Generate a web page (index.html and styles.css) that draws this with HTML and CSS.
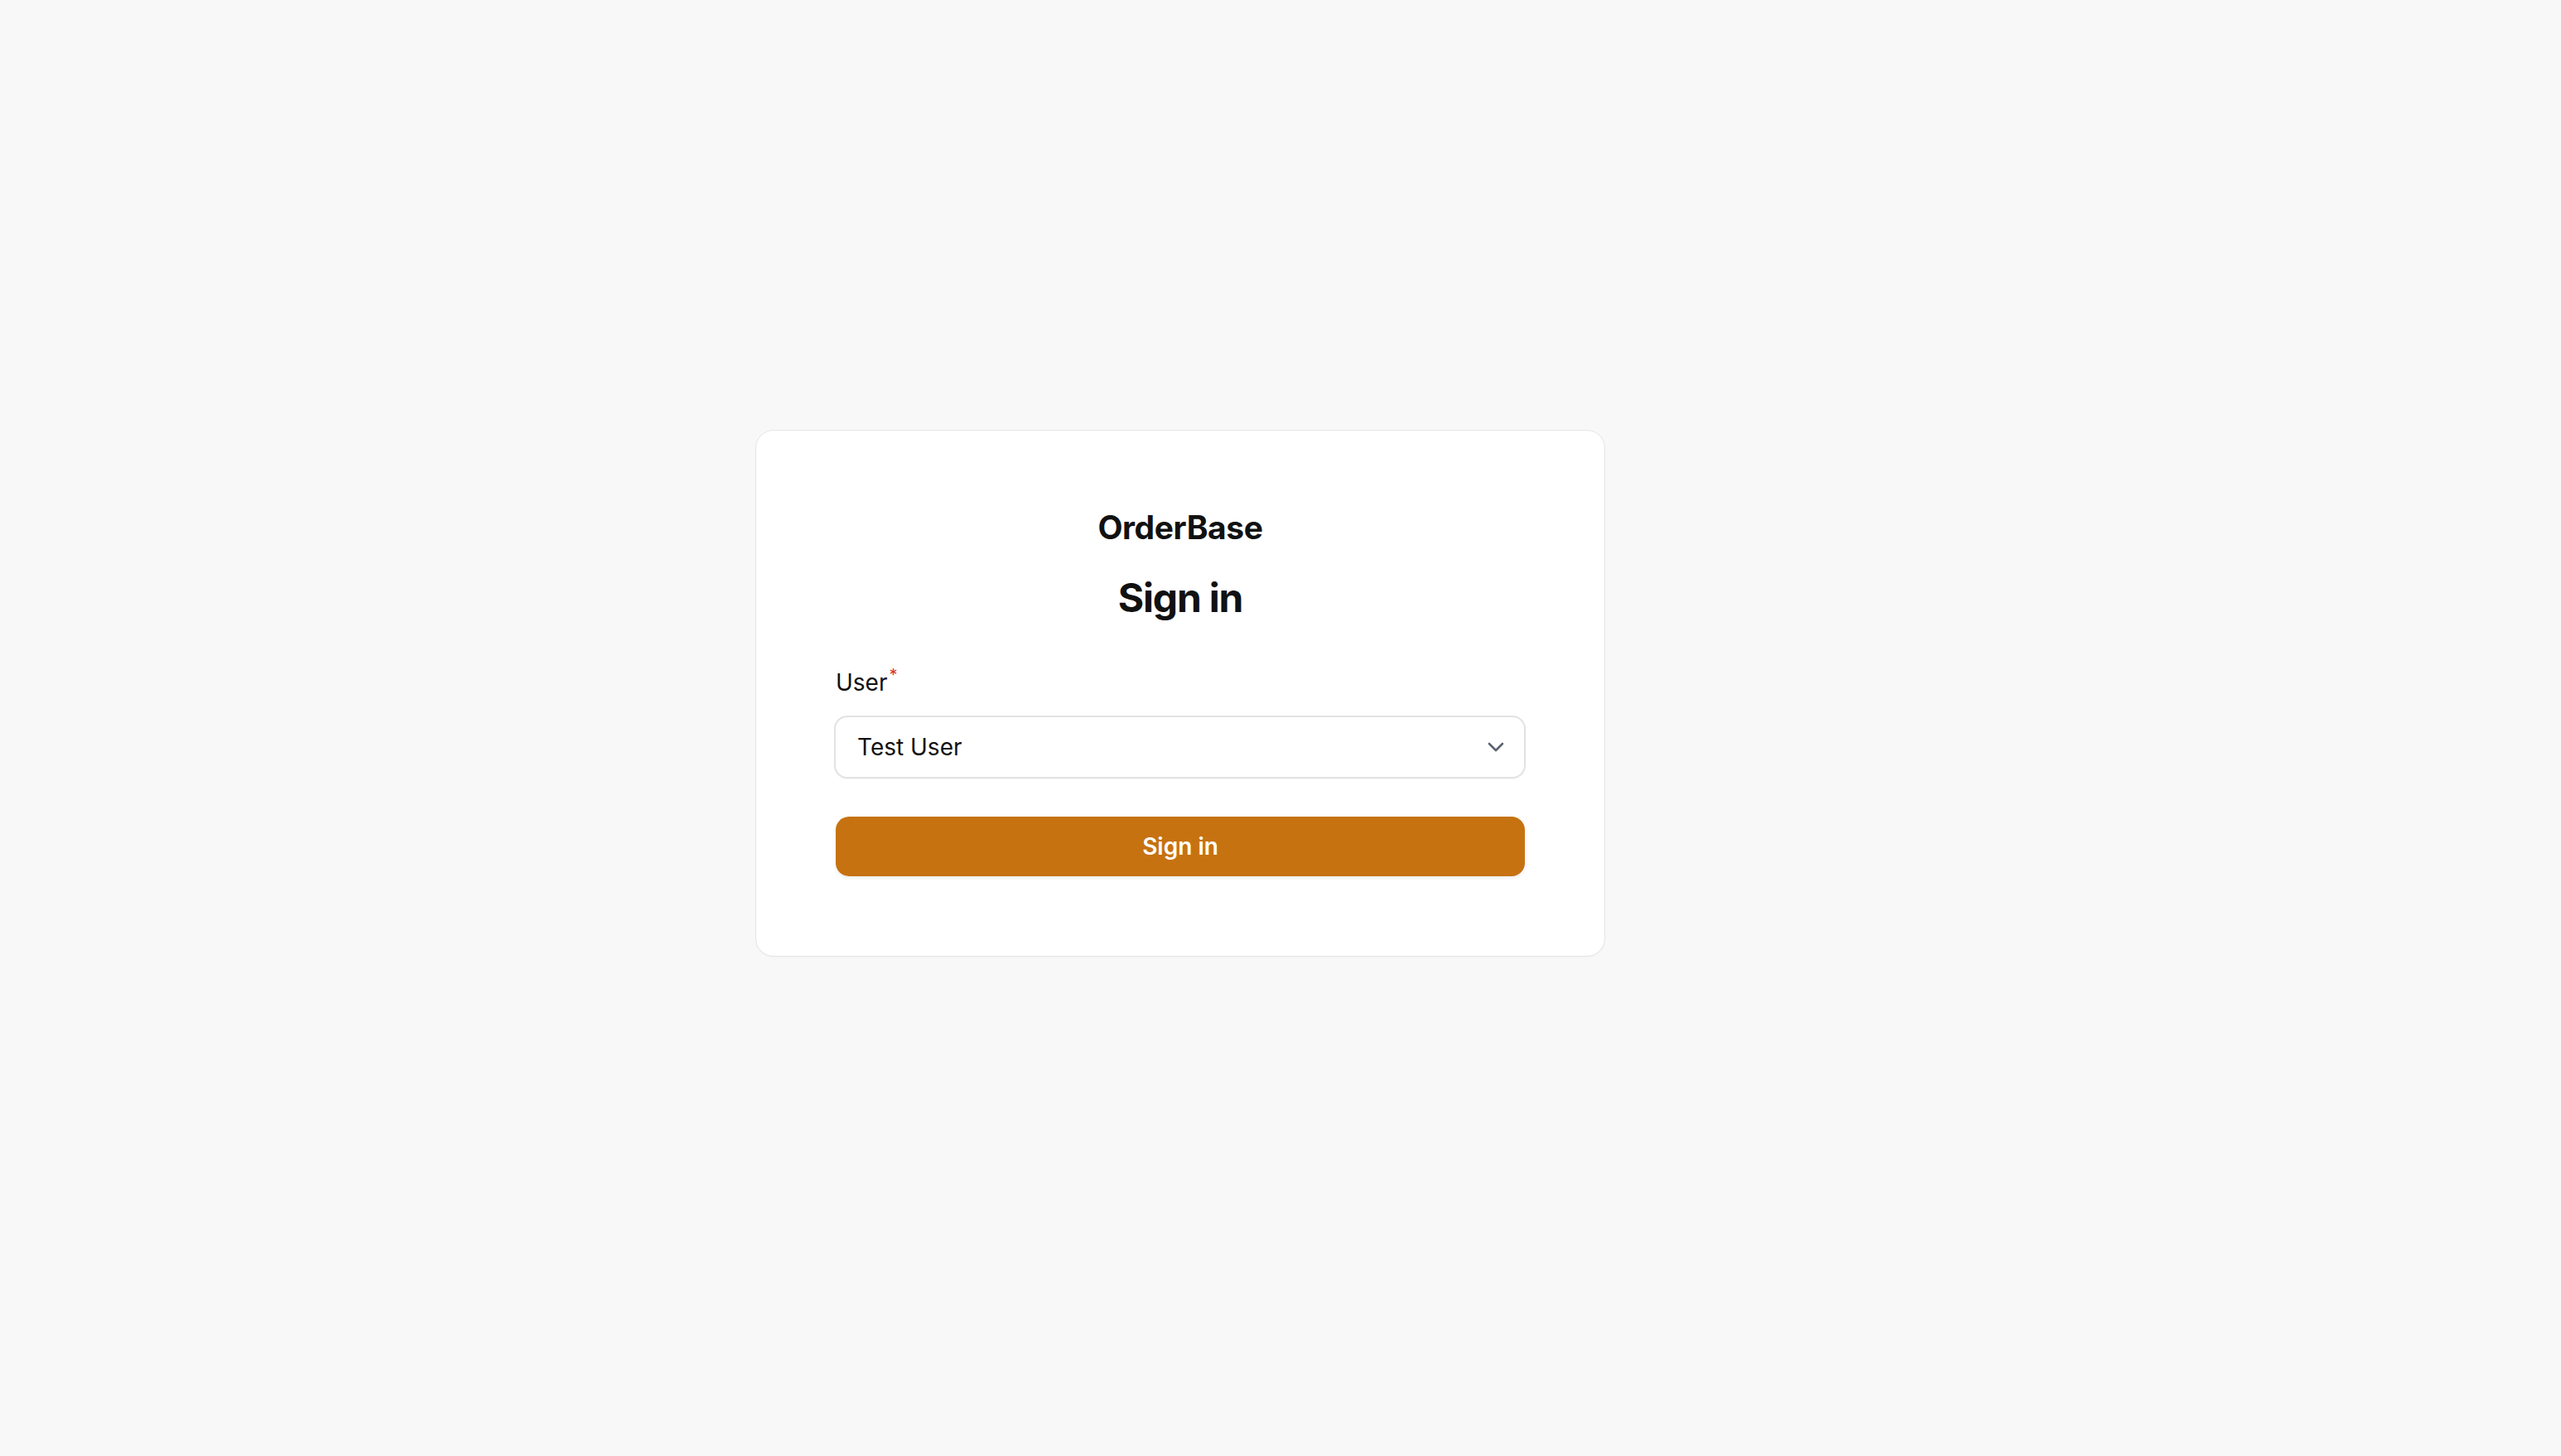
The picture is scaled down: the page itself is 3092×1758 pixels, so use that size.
FILE: index.html
```html
<!DOCTYPE html>
<html lang="en">
<head>
    <meta charset="UTF-8">
    <meta name="viewport" content="width=device-width, initial-scale=1.0">
    <title>Sign in - OrderBase</title>
    <link rel="stylesheet" href="styles.css">
</head>
<body>
    <main class="page">
        <form class="card" id="loginForm">
            <div class="brand">OrderBase</div>
            <h1 class="title">Sign in</h1>

            <label class="field-label" for="user">User<span class="required">*</span></label>
            <div class="select" id="user" tabindex="0">
                <span class="select-value">Test User</span>
                <svg class="chevron" width="20" height="12" viewBox="0 0 20 12" fill="none">
                    <path d="M2 2l8 8 8-8" stroke="currentColor" stroke-width="2.6" stroke-linecap="round" stroke-linejoin="round"/>
                </svg>
            </div>

            <button type="submit" class="btn-primary">Sign in</button>
        </form>
    </main>
</body>
</html>
```

FILE: styles.css
```css
html, body {
    margin: 0;
    padding: 0;
}
body {
    font-family: Inter, "Noto Sans", sans-serif;
    background-color: #f8f8f8;
    color: #111111;
    min-height: 1758px;
}
.page {
    padding: 519px 0 0 912px;
}
.card {
    box-sizing: border-box;
    width: 1026px;
    padding: 96px;
    background: #ffffff;
    border: 1px solid #e6e6e6;
    border-radius: 22px;
    display: flex;
    flex-direction: column;
    box-shadow: 0 1px 2px rgba(0, 0, 0, 0.03);
}
.brand {
    margin-top: -2px;
    font-size: 39px;
    line-height: 46px;
    font-weight: 700;
    text-align: center;
    letter-spacing: -0.4px;
}
.title {
    margin: 34px 0 0;
    font-size: 48px;
    line-height: 56px;
    font-weight: 700;
    text-align: center;
    letter-spacing: -1.2px;
}
.field-label {
    margin-top: 54px;
    font-size: 28px;
    line-height: 40px;
    font-weight: 400;
    color: #111111;
}
.required {
    color: #d9342b;
    font-size: 20px;
    position: relative;
    top: -12px;
    margin-left: 2px;
}
.select {
    box-sizing: border-box;
    margin-top: 17px;
    margin-left: -2px;
    margin-right: -1px;
    height: 76px;
    padding: 0 24px 0 26px;
    border: 2px solid #e2e2e4;
    border-radius: 16px;
    display: flex;
    align-items: center;
    justify-content: space-between;
    font-size: 28px;
    color: #111111;
    box-shadow: 0 1px 2px rgba(0, 0, 0, 0.04);
}
.chevron {
    color: #5d6270;
}
.btn-primary {
    margin-top: 46px;
    height: 72px;
    border: none;
    border-radius: 16px;
    background-color: #c67211;
    color: #ffffff;
    font-family: Inter, "Noto Sans", sans-serif;
    font-size: 28px;
    font-weight: 600;
    cursor: pointer;
    box-shadow: 0 2px 4px rgba(0, 0, 0, 0.08);
}
.btn-primary:hover {
    background-color: #b8680e;
}
```
